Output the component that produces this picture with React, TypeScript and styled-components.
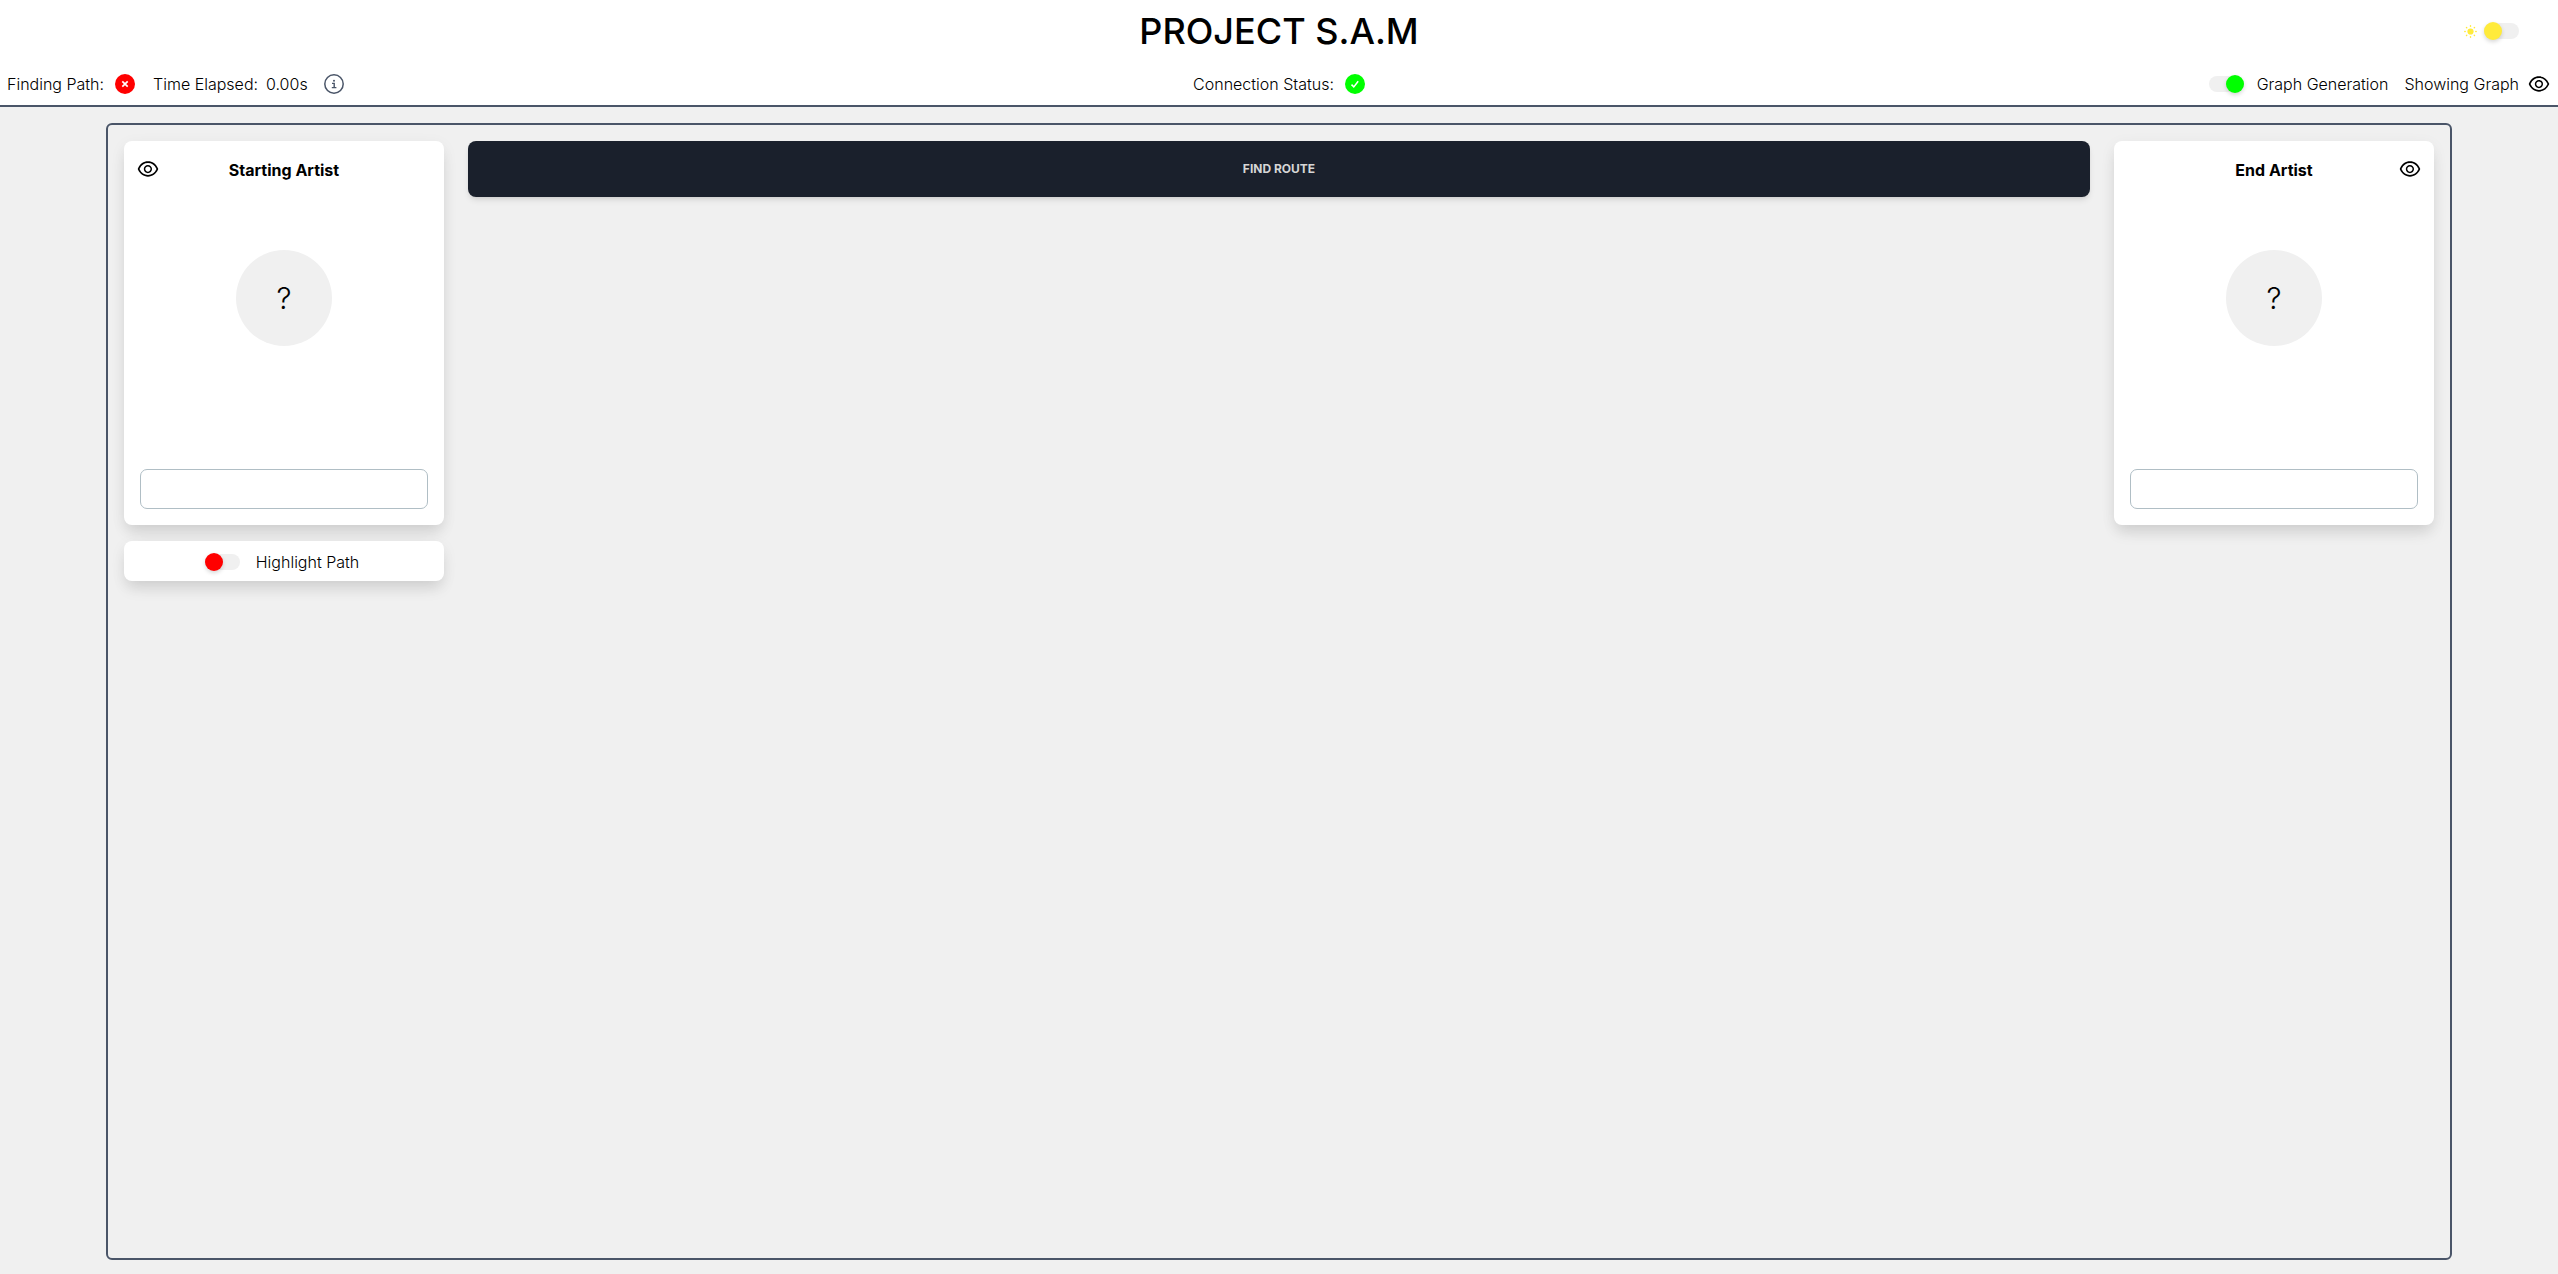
import React, { useState } from "react";
import styled, { createGlobalStyle } from "styled-components";
import { AiOutlineEye } from "react-icons/ai";

const GlobalStyle = createGlobalStyle`
  *, *::before, *::after { box-sizing: border-box; }
  body {
    margin: 0;
    background: #f0f0f0;
    color: #000;
    font-family: Inter, "Liberation Sans", sans-serif;
    font-size: 16px;
    line-height: 24px;
  }
`;

const Page = styled.div`
  display: flex;
  flex-direction: column;
  min-height: 100vh;
`;

const Header = styled.header`
  background: #fff;
  border-bottom: 2px solid #4a5568;
`;

const TitleRow = styled.div`
  display: grid;
  grid-template-columns: 1fr auto 1fr;
  align-items: center;
  height: 62px;
  padding: 0 39px;
`;

const Title = styled.h1`
  grid-column: 2;
  margin: 0;
  font-size: 36px;
  font-weight: 500;
  line-height: 40px;
`;

const ThemeToggle = styled.label`
  display: flex;
  align-items: center;
  justify-self: end;
  gap: 7px;
`;

const StatusRow = styled.div`
  display: grid;
  grid-template-columns: 1fr auto 1fr;
  align-items: center;
  height: 43px;
  padding: 0 7px;
  font-weight: 300;
`;

const StatusGroup = styled.div<{ $end?: boolean; $gap: number }>`
  display: flex;
  align-items: center;
  justify-content: ${(p) => (p.$end ? "flex-end" : "flex-start")};
  gap: ${(p) => p.$gap}px;
`;

const ToggleLabel = styled.label`
  display: flex;
  align-items: center;
  gap: 13px;
  font-weight: 300;
`;

const Switch = styled.input.attrs({ type: "checkbox", role: "switch" })<{ $color: string }>`
  appearance: none;
  display: flex;
  align-items: center;
  flex: none;
  width: 35px;
  height: 16px;
  margin: 0;
  border-radius: 8px;
  background: #f0f0f0;
  cursor: pointer;

  &::before {
    content: "";
    flex: none;
    width: 18px;
    height: 18px;
    border-radius: 50%;
    background: ${(p) => p.$color};
    box-shadow: 0 2px 4px rgba(0, 0, 0, 0.16);
  }

  &:checked {
    justify-content: flex-end;
  }
`;

const IconButton = styled.button`
  display: flex;
  align-items: center;
  justify-content: center;
  padding: 0;
  border: 0;
  background: none;
  color: inherit;
  cursor: pointer;
`;

const InfoButton = styled(IconButton)`
  color: #4a5568;
`;

const Frame = styled.main`
  flex: 1;
  display: grid;
  grid-template-columns: 320px minmax(0, 1fr) 320px;
  align-items: start;
  gap: 24px;
  margin: 16px 106px 14px;
  padding: 16px;
  border: 2px solid #4a5568;
  border-radius: 6px;
`;

const Column = styled.section`
  display: flex;
  flex-direction: column;
  gap: 16px;
`;

const Panel = styled.div`
  border-radius: 8px;
  background: #fff;
  box-shadow: 0 10px 15px -3px rgba(0, 0, 0, 0.1), 0 4px 16px rgba(0, 0, 0, 0.06);
`;

const ArtistCard = styled(Panel)`
  display: flex;
  flex-direction: column;
  align-items: center;
  height: 384px;
  padding: 16px;
`;

const CardHeader = styled.div`
  display: grid;
  grid-template-columns: 24px 1fr 24px;
  align-items: start;
  align-self: stretch;
  margin: 0 -4px 67px;
`;

const CardTitle = styled.h2`
  grid-area: 1 / 2;
  margin: 0;
  font-size: 16px;
  font-weight: 700;
  line-height: 26px;
  text-align: center;
`;

const EyeSlot = styled.div<{ $side: "left" | "right" }>`
  grid-area: 1 / ${(p) => (p.$side === "left" ? 1 : 3)};
`;

const Avatar = styled.div`
  display: grid;
  place-items: center;
  width: 96px;
  height: 96px;
  border-radius: 50%;
  background: #f0f0f0;
  font-size: 30px;
  font-weight: 300;
  line-height: 36px;
`;

const ArtistInput = styled.input`
  align-self: stretch;
  height: 40px;
  margin-top: auto;
  padding: 8px 12px;
  border: 1px solid #b0bec5;
  border-radius: 7px;
  background: transparent;
  font: inherit;
`;

const HighlightPanel = styled(Panel)`
  display: flex;
  align-items: center;
  justify-content: center;
  height: 40px;
  padding: 1px 4px 0 0;
`;

const HighlightLabel = styled(ToggleLabel)`
  gap: 16px;
`;

const RouteButton = styled.button`
  width: 100%;
  height: 56px;
  border: 0;
  border-radius: 8px;
  background: #1a202c;
  color: #d6d6d6;
  box-shadow: 0 4px 6px -1px rgba(0, 0, 0, 0.1), 0 2px 4px -2px rgba(0, 0, 0, 0.1);
  font: 700 12px/16px Inter, "Liberation Sans", sans-serif;
  text-transform: uppercase;
  cursor: pointer;
`;

function StatusIcon({ ok, label }: { ok: boolean; label: string }) {
  return (
    <svg width="20" height="20" viewBox="0 0 20 20" role="img" aria-label={label}>
      <circle cx="10" cy="10" r="10" fill={ok ? "#00ff00" : "#ff0000"} />
      <path
        d={ok ? "M6.5 10.6 8.8 12.9 13.2 7.3" : "M7.3 7.3 12.7 12.7M12.7 7.3 7.3 12.7"}
        fill="none"
        stroke="#fff"
        strokeWidth={ok ? 1.5 : 1.7}
      />
    </svg>
  );
}

function InfoIcon() {
  return (
    <svg width="20" height="20" viewBox="0 0 20 20" fill="none" stroke="currentColor" strokeWidth="1.5" aria-hidden="true">
      <circle cx="10" cy="10" r="9.2" />
      <circle cx="10" cy="6.8" r="1" fill="currentColor" stroke="none" />
      <path d="M8 9.4H10.2V13.4M7.8 13.6H12.4" strokeWidth="1.4" />
    </svg>
  );
}

function SunIcon() {
  const rays = [0, 45, 90, 135, 180, 225, 270, 315];
  return (
    <svg width="13" height="13" viewBox="0 0 13 13" fill="#ffeb3b" aria-hidden="true">
      <circle cx="6.5" cy="6.5" r="3.1" />
      {rays.map((angle) => (
        <rect key={angle} x="5.8" y="0.1" width="1.4" height="1.8" rx="0.7" transform={`rotate(${angle} 6.5 6.5)`} />
      ))}
    </svg>
  );
}

function Artist({ title, side }: { title: string; side: "left" | "right" }) {
  return (
    <ArtistCard>
      <CardHeader>
        <EyeSlot $side={side}>
          <IconButton type="button" aria-label={`Toggle ${title}`}>
            <AiOutlineEye size={24} />
          </IconButton>
        </EyeSlot>
        <CardTitle>{title}</CardTitle>
      </CardHeader>
      <Avatar>?</Avatar>
      <ArtistInput type="text" aria-label={title} />
    </ArtistCard>
  );
}

export default function App() {
  const [dark, setDark] = useState(false);
  const [generate, setGenerate] = useState(true);
  const [highlight, setHighlight] = useState(false);

  return (
    <Page>
      <GlobalStyle />
      <Header>
        <TitleRow>
          <Title>PROJECT S.A.M</Title>
          <ThemeToggle>
            <SunIcon />
            <Switch $color="#ffeb3b" aria-label="Theme" checked={dark} onChange={() => setDark(!dark)} />
          </ThemeToggle>
        </TitleRow>
        <StatusRow>
          <StatusGroup $gap={16}>
            <StatusGroup $gap={18}>
              <StatusGroup $gap={11}>
                <span>Finding Path:</span>
                <StatusIcon ok={false} label="Not searching" />
              </StatusGroup>
              <StatusGroup $gap={8}>
                <span>Time Elapsed:</span>
                <span>0.00s</span>
              </StatusGroup>
            </StatusGroup>
            <InfoButton type="button" aria-label="Information">
              <InfoIcon />
            </InfoButton>
          </StatusGroup>
          <StatusGroup $gap={11}>
            <span>Connection Status:</span>
            <StatusIcon ok label="Connected" />
          </StatusGroup>
          <StatusGroup $end $gap={16}>
            <ToggleLabel>
              <Switch $color="#00ff00" checked={generate} onChange={() => setGenerate(!generate)} />
              Graph Generation
            </ToggleLabel>
            <StatusGroup $gap={8}>
              <span>Showing Graph</span>
              <IconButton type="button" aria-label="Toggle graph">
                <AiOutlineEye size={24} />
              </IconButton>
            </StatusGroup>
          </StatusGroup>
        </StatusRow>
      </Header>
      <Frame>
        <Column>
          <Artist title="Starting Artist" side="left" />
          <HighlightPanel>
            <HighlightLabel>
              <Switch $color="#ff0000" checked={highlight} onChange={() => setHighlight(!highlight)} />
              Highlight Path
            </HighlightLabel>
          </HighlightPanel>
        </Column>
        <RouteButton type="button">Find Route</RouteButton>
        <Column>
          <Artist title="End Artist" side="right" />
        </Column>
      </Frame>
    </Page>
  );
}
